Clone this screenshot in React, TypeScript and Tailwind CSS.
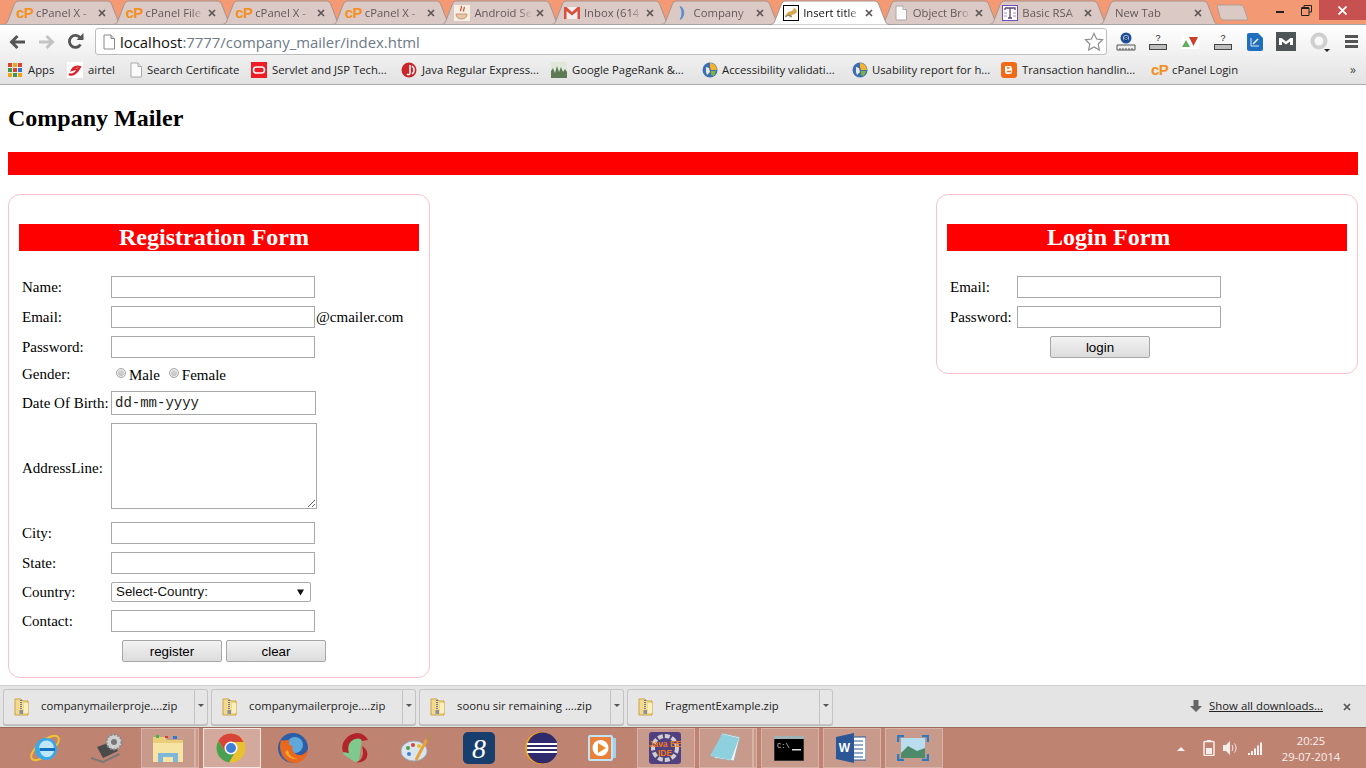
import React from "react";

const UI = "font-['Open_Sans','Noto_Sans',sans-serif]";
const SERIF = "font-['Liberation_Serif','Times_New_Roman',serif]";
const SANS = "font-['Liberation_Sans',Arial,sans-serif]";

const CP = () => (
  <span className={`${SANS} block w-[16px] text-[15px] leading-[16px] font-bold tracking-[-0.6px] text-[#f3901f]`}>cP</span>
);
const Doc = ({ c = "#a9a9a9" }: { c?: string }) => (
  <svg width="16" height="16" viewBox="0 0 16 16"><path d="M3 1h7l3.5 3.5V15H3z" fill="#fafafa" stroke={c} /><path d="M10 1v3.5h3.5" fill="#e8e8e8" stroke={c} /></svg>
);
const Coffee = () => (
  <svg width="16" height="16" viewBox="0 0 16 16"><rect width="16" height="16" fill="#f6efe6" /><path d="M7 1c2 2-2 3 0 5M10 2c1.5 2-2 2.500 0 4.500" stroke="#d0532c" strokeWidth="1.300" fill="none" /><path d="M2 9h11c0 3-2 5-5.500 5S2 12 2 9z" fill="#e8c6a8" stroke="#c27b50" strokeWidth=".7" /></svg>
);
const Gmail = () => (
  <svg width="16" height="16" viewBox="0 0 16 16"><rect x="0" y="2" width="16" height="12" fill="#f4eeee" /><path d="M0 2h2.500L8 7l5.500-5H16v12h-2.500V6L8 10.500 2.500 6v8H0z" fill="#d9503f" /></svg>
);
const Arc = () => (
  <svg width="16" height="16" viewBox="0 0 16 16"><path d="M6 1.500c5 1 5 11.500 0 13 2.500-4 2.500-9 0-13z" fill="#5a8bd0" stroke="#5a8bd0" strokeWidth=".8" /></svg>
);
const Tomcat = () => (
  <svg width="16" height="16" viewBox="0 0 16 16"><rect x=".5" y=".5" width="15" height="15" fill="#fff" stroke="#000" /><path d="M2 11l3-4 4-1 2-3 2 1 1 3-2 2-3 1-2 3-1-2z" fill="#d5a94e" /><path d="M2 12l4-2 3 2" stroke="#777" fill="none" /></svg>
);
const RSA = () => (
  <svg width="16" height="16" viewBox="0 0 16 16"><rect x=".5" y=".5" width="15" height="15" fill="#fff" stroke="#6b4fc0" /><path d="M3 3h10v2M8 3v10M6 13h4M3 3v2" stroke="#5a4870" strokeWidth="1.300" fill="none" /><path d="M2 8h3M11 8h3M2 11h3M11 11h3" stroke="#a090b0" /></svg>
);

const tabs = [
  { t: "cPanel X - ", i: <CP /> },
  { t: "cPanel File", i: <CP /> },
  { t: "cPanel X - ", i: <CP /> },
  { t: "cPanel X - ", i: <CP /> },
  { t: "Android Se", i: <Coffee /> },
  { t: "Inbox (614", i: <Gmail /> },
  { t: "Company", i: <Arc />, gap: true },
  { t: "Insert title", i: <Tomcat />, active: true },
  { t: "Object Bro", i: <Doc /> },
  { t: "Basic RSA", i: <RSA /> },
  { t: "New Tab", i: null },
];

const Tab = ({ t, i, active, gap }: { t: string; i: React.ReactNode; active?: boolean; gap?: boolean }) => (
  <div className={`relative h-[25px] w-[109.6px] shrink-0 ${active ? "z-10" : "z-0"}`}>
    <svg className="absolute left-[-6px] top-0" width="122" height="25" viewBox="0 0 122 25">
      <path d="M0 24.500c4 0 5-1 6-4L12 5c1-3 2.500-4 5-4h88c2.500 0 4 1 5 4l6 15.500c1 3 2 4 6 4" fill={active ? "#ffffff" : "#dbc9c5"} stroke="#a9938c" />
    </svg>
    <div className="absolute left-[8px] top-[5px] flex h-[16px] items-center">
      {i ? <span className="h-[16px] w-[16px]">{i}</span> : <span className="w-[3px]" />}
      <span className={`${UI} ${i ? "ml-[4px]" : "ml-0"} w-[58px] overflow-hidden whitespace-nowrap text-[11.300px] leading-[16px] ${active ? "text-[#111]" : "text-[#63575a]"} ${gap ? "-ml-[3px]" : ""} [mask-image:linear-gradient(to_right,#000_78%,transparent)]`}>{t}</span>
    </div>
    <svg className="absolute left-[90px] top-[9px]" width="8" height="8" viewBox="0 0 8 8"><path d="M1 1l6 6M7 1L1 7" stroke="#5c5656" strokeWidth="1.700" /></svg>
  </div>
);

const TitleBar = () => (
  <div className="relative flex h-[25px] bg-[#f39a74] pl-[8px]">
    {tabs.map((x, n) => <Tab key={n} {...x} />)}
    <div className="absolute bottom-0 left-0 right-0 z-[1] h-px bg-[#a4a4a4]" />
    <svg className="ml-[3px] mt-[4px] shrink-0" width="32" height="17" viewBox="0 0 32 17"><path d="M1 1h22c2 0 3 1 4 3l4 12H7c-2 0-3-1-4-3L.5 3C.3 2 .5 1 1 1z" fill="#dbc9c5" stroke="#b39c94" /></svg>
    <div className="absolute right-0 top-0 z-[2] flex h-[20px] items-start">
      <div className="flex h-[20px] w-[26px] items-center justify-center"><div className="mt-[3px] h-[2px] w-[8px] bg-[#222]" /></div>
      <div className="flex h-[20px] w-[26px] items-center justify-center">
        <svg width="11" height="11" viewBox="0 0 11 11"><path d="M3 2.500V.5h7.500v6.500H8M.5 3h7.500v7.500H.5z" fill="none" stroke="#222" /><path d="M.5 3h7.500" stroke="#222" strokeWidth="2" /></svg>
      </div>
      <div className="flex h-[20px] w-[47px] items-center justify-center bg-[#c75050]">
        <svg width="9" height="9" viewBox="0 0 9 9"><path d="M.5.5l8 8M8.500.5l-8 8" stroke="#fff" strokeWidth="1.800" /></svg>
      </div>
    </div>
  </div>
);

const Ext1 = () => (
  <svg width="20" height="20" viewBox="0 0 20 20"><circle cx="10" cy="6" r="5.500" fill="#1b4f9c" /><circle cx="10" cy="6" r="3" fill="#a9c6e8" /><text x="10" y="9" textAnchor="middle" fontSize="8" fontWeight="700" fill="#0a2a5a" fontFamily="Liberation Sans">8</text><path d="M1 13h18v5H1zM4 16v2M7 16v2M10 16v2M13 16v2M16 16v2" fill="#eee" stroke="#555" /></svg>
);
const Ext2 = () => (
  <svg width="20" height="20" viewBox="0 0 20 20"><text x="10" y="9" textAnchor="middle" fontSize="9" fill="#222" fontFamily="Liberation Sans">?</text><rect x="1.500" y="12.500" width="17" height="5" fill="#bdbdbd" stroke="#444" /></svg>
);

const Toolbar = () => (
  <div className="flex h-[33px] items-center pl-[9px]">
    <svg width="17" height="16" viewBox="0 0 17 16"><path d="M16 8H3M8.500 2L2.500 8l6 6" fill="none" stroke="#555" strokeWidth="3" /></svg>
    <svg className="ml-[12px]" width="17" height="16" viewBox="0 0 17 16"><path d="M1 8h13M8.500 2l6 6-6 6" fill="none" stroke="#c4c4c4" strokeWidth="3" /></svg>
    <svg className="ml-[12px]" width="17" height="17" viewBox="0 0 17 17"><path d="M13.500 11.500A6 6 0 1 1 13 4.500" fill="none" stroke="#555" strokeWidth="2.800" /><path d="M9.500 7h7V0z" fill="#555" /></svg>
    <div className="ml-[11px] flex h-[27px] w-[1012px] shrink-0 items-center rounded-[3px] border border-[#bdbdbd] bg-white">
      <span className="ml-[5px]"><svg className="block" width="16" height="16" viewBox="0 0 16 16"><path d="M3 1h7l3.500 3.500V15H3z" fill="#fff" stroke="#8a8a8a" /><path d="M10 1v3.500h3.500" fill="#ddd" stroke="#8a8a8a" /></svg></span>
      <span className={`${UI} ml-[3px] whitespace-nowrap text-[14.900px] leading-[20px] text-[#6d7a88]`}><span className="text-[#111]">localhost</span>:7777/company_mailer/index.html</span>
      <svg className="ml-auto mr-[2px]" width="20" height="19" viewBox="0 0 20 19"><path d="M10 1.500l2.600 5.500 6 .8-4.400 4.200 1.100 6L10 15l-5.300 3 1.100-6L1.400 7.800l6-.8z" fill="#fff" stroke="#8d8d8d" strokeWidth="1.200" /></svg>
    </div>
    <div className="ml-[9px]"><Ext1 /></div>
    <div className="ml-[12px]"><Ext2 /></div>
    <div className="ml-[13px]">
      <svg width="18" height="14" viewBox="0 0 18 14"><rect width="18" height="14" fill="#fff" /><path d="M1 12l4-7 4 7z" fill="#5eb05e" /><path d="M8 2h9l-4.500 9z" fill="#c9402d" /></svg>
    </div>
    <div className="ml-[14px]"><Ext2 /></div>
    <div className="ml-[14px]">
      <svg width="16" height="18" viewBox="0 0 16 18"><path d="M0 2q0-2 2-2h9l5 5v11q0 2-2 2H2q-2 0-2-2z" fill="#1f6fbe" /><path d="M4 5v8h8" fill="none" stroke="#dcecf9" /><path d="M6 11l5-5" stroke="#fff" strokeWidth="1.500" /></svg>
    </div>
    <div className="ml-[13px]">
      <svg width="20" height="19" viewBox="0 0 20 19"><rect width="20" height="19" fill="#4e5557" /><path d="M3 13V6h2.500L10 9.500 14.500 6H17v7h-3V9.500l-4 3-4-3V13z" fill="#fff" /></svg>
    </div>
    <div className="ml-[14px]">
      <svg width="20" height="20" viewBox="0 0 20 20"><circle cx="9" cy="9" r="6.500" fill="none" stroke="#cfcfcf" strokeWidth="4" /><path d="M14 17h6l-3 3z" fill="#222" /></svg>
    </div>
    <div className="ml-[15px]">
      <div className="flex w-[13px] flex-col gap-[2px]"><div className="h-[3px] bg-[#555]" /><div className="h-[3px] bg-[#555]" /><div className="h-[3px] bg-[#555]" /></div>
    </div>
  </div>
);

const Globe = () => (
  <svg width="16" height="16" viewBox="0 0 16 16"><circle cx="8" cy="8" r="7.500" fill="#3e6fb0" /><path d="M8 1a7 7 0 0 1 7 7H9l-1-3z" fill="#f4b32b" /><path d="M4 5l3 1 1 4-3 3-1-3z" fill="#e9e9e9" /><path d="M9 9h5l-2 5-3-1z" fill="#7fb341" /></svg>
);
const AppsIcon = () => (
  <div className="grid h-[14px] w-[14px] grid-cols-3 gap-[1px]">
    {["#e0402f", "#f0a31a", "#e0402f", "#3f9b4a", "#e0402f", "#2f79d0", "#f0a31a", "#3f9b4a", "#f0a31a"].map((c, i) => (
      <div key={i} className="h-[4px] w-[4px]" style={{ backgroundColor: c }} />
    ))}
  </div>
);
const Airtel = () => (
  <svg width="16" height="16" viewBox="0 0 16 16"><rect width="16" height="16" fill="#fff" /><path d="M2 12c3 2 8-1 11-7-3-1-7 0-8 3 3-1 5-1 6 0" fill="none" stroke="#d8232a" strokeWidth="2.200" /></svg>
);
const Oracle = () => (
  <svg width="16" height="16" viewBox="0 0 16 16"><rect width="16" height="16" fill="#ee1c25" /><rect x="2.500" y="5" width="11" height="6" rx="3" fill="none" stroke="#fff" strokeWidth="1.600" /></svg>
);
const JavaR = () => (
  <svg width="16" height="16" viewBox="0 0 16 16"><circle cx="8" cy="8" r="7.500" fill="#c9252b" /><path d="M9 3v8c0 2-2 2-3 1M11 4a5 5 0 0 1 0 8" fill="none" stroke="#fff" strokeWidth="1.500" /></svg>
);
const PageRank = () => (
  <svg width="16" height="16" viewBox="0 0 16 16"><rect width="16" height="16" fill="#dfe8d9" /><path d="M0 16V9l2-3 2 5 2-7 2 6 2-5 2 5 2-3 2 3v6z" fill="#5d7a55" /></svg>
);
const Blogger = () => (
  <svg width="16" height="16" viewBox="0 0 16 16"><rect width="16" height="16" rx="3" fill="#f26a16" /><path d="M5 4h4c1.500 0 2 1.500 2 3v2v1c0 1-1 2-2 2H6c-1 0-2-1-2-2V5c0-.5.500-1 1-1z" fill="#fff" /><path d="M6 6h2.500M6 9.500h4" stroke="#f26a16" strokeWidth="1.300" /></svg>
);

const marks = [
  { i: <AppsIcon />, t: "Apps", w: "w-[59px]", ic: "w-[20px]" },
  { i: <Airtel />, t: "airtel", w: "w-[61px]", ic: "w-[21px]" },
  { i: <Doc />, t: "Search Certificate", w: "w-[123px]", ic: "w-[19px]" },
  { i: <Oracle />, t: "Servlet and JSP Tech...", w: "w-[150px]", ic: "w-[21px]" },
  { i: <JavaR />, t: "Java Regular Express...", w: "w-[150px]", ic: "w-[21px]" },
  { i: <PageRank />, t: "Google PageRank &...", w: "w-[151px]", ic: "w-[21px]" },
  { i: <Globe />, t: "Accessibility validati...", w: "w-[150px]", ic: "w-[20px]" },
  { i: <Globe />, t: "Usability report for h...", w: "w-[149px]", ic: "w-[20px]" },
  { i: <Blogger />, t: "Transaction handlin...", w: "w-[150px]", ic: "w-[21px]" },
  { i: <CP />, t: "cPanel Login", w: "w-[100px]", ic: "w-[21px]" },
];

const Bookmarks = () => (
  <div className="flex h-[27px] items-center border-b border-[#ababab] pb-[2px] pl-[8px]">
    {marks.map((m) => (
      <div key={m.t} className={`flex shrink-0 items-center ${m.w}`}>
        <div className={`shrink-0 ${m.ic}`}>{m.i}</div>
        <span className={`${UI} whitespace-nowrap text-[11.300px] leading-[16px] text-[#222]`}>{m.t}</span>
      </div>
    ))}
    <span className={`${UI} ml-auto mr-[10px] text-[12px] leading-[16px] text-[#444]`}>»</span>
  </div>
);

const inputCls = "block h-[22px] w-[204px] border border-[#a9a9a9] bg-white";
const Label = ({ children, w = "w-[92px]", extra = "" }: { children: React.ReactNode; w?: string; extra?: string }) => (
  <div className={`${w} ${extra} shrink-0 whitespace-nowrap pl-[3px] text-[15px] leading-[18px] text-black`}>{children}</div>
);
const Row = ({ label, children, mt = "mt-[8px]" }: { label: string; children?: React.ReactNode; mt?: string }) => (
  <div className={`flex items-center ${mt}`}>
    <Label>{label}</Label>
    <input className={inputCls} readOnly aria-label={label} />
    {children}
  </div>
);
const Btn = ({ children }: { children: string }) => (
  <button className={`${SANS} h-[22px] w-[100px] rounded-[2px] border border-[#a6a6a6] bg-gradient-to-b from-[#f2f2f2] to-[#dcdcdc] pt-[1px] text-[13.333px] leading-[19px] text-black`}>{children}</button>
);
const Radio = () => <span className="block h-[10px] w-[10px] rounded-full border border-[#a8a8a8] bg-gradient-to-b from-[#dcdcdc] to-[#bdbdbd] shadow-[inset_0_0_0_1px_#eee]" />;
const Heading = ({ children }: { children: string }) => (
  <h3 className="h-[27px] bg-[#ff0000] pl-[100px] text-[24px] leading-[27px] font-bold text-white">{children}</h3>
);

const Register = () => (
  <div className={`${SERIF} h-[484px] w-[422px] rounded-[12px] border border-[#ffc0cb] bg-white px-[10px] pt-[29px]`}>
    <Heading>Registration Form</Heading>
    <Row label="Name:" mt="mt-[25px]" />
    <Row label="Email:"><span className="ml-px text-[15px] leading-[18px]">@cmailer.com</span></Row>
    <Row label="Password:" />
    <div className="mt-[8px] flex h-[16px] items-center">
      <Label>Gender:</Label>
      <span className="ml-[5px] mt-[-2px]"><Radio /></span>
      <span className="ml-[3px] mt-[1px] text-[15px] leading-[18px]">Male</span>
      <span className="ml-[9px] mt-[-2px]"><Radio /></span>
      <span className="ml-[3px] mt-[1px] text-[15px] leading-[18px]">Female</span>
    </div>
    <div className="mt-[9px] flex items-center">
      <Label>Date Of Birth:</Label>
      <input className="block h-[24px] w-[205px] border border-[#a9a9a9] bg-white pl-[3px] font-['Liberation_Mono',monospace] text-[14px] text-[#222]" readOnly defaultValue="dd-mm-yyyy" aria-label="Date Of Birth" />
    </div>
    <div className="mt-[8px] flex items-center">
      <Label extra="pt-[3px]">AddressLine:</Label>
      <textarea className="block h-[86px] w-[206px] border border-[#a9a9a9] bg-white" readOnly aria-label="AddressLine" />
    </div>
    <Row label="City:" mt="mt-[13px]" />
    <Row label="State:" />
    <div className="mt-[8px] flex items-center">
      <Label>Country:</Label>
      <div className={`${SANS} flex h-[20px] w-[200px] items-center justify-between rounded-[2px] border border-[#a9a9a9] bg-white pl-[4px] pr-[6px] text-[13.333px] text-[#111]`}>
        <span>Select-Country:</span>
        <svg width="7" height="7" viewBox="0 0 7 7"><path d="M0 .5h7L3.500 6.500z" fill="#111" /></svg>
      </div>
    </div>
    <Row label="Contact:" />
    <div className="mt-[8px] flex gap-[4px] pl-[103px]"><Btn>register</Btn><Btn>clear</Btn></div>
  </div>
);

const Login = () => (
  <div className={`${SERIF} h-[180px] w-[422px] rounded-[12px] border border-[#ffc0cb] bg-white px-[10px] pt-[29px]`}>
    <Heading>Login Form</Heading>
    <div className="mt-[25px] flex items-center"><Label w="w-[70px]">Email:</Label><input className={inputCls} readOnly aria-label="Email" /></div>
    <div className="mt-[8px] flex items-center"><Label w="w-[70px]">Password:</Label><input className={inputCls} readOnly aria-label="Password" /></div>
    <div className="mt-[8px] flex pl-[103px]"><Btn>login</Btn></div>
  </div>
);

const Zip = () => (
  <svg width="16" height="18" viewBox="0 0 16 18"><path d="M1 1h6l2 2h5v14H1z" fill="#f5d98a" stroke="#c9a348" /><path d="M10 5h4v10h-4z" fill="#fbeebd" /><path d="M7 2v12" stroke="#6f7ea0" strokeWidth="2" strokeDasharray="1 1" /><rect x="5.500" y="12" width="3.500" height="4" fill="#8a8fa5" /></svg>
);
const files = [
  { t: "companymailerproje....zip", w: "w-[205px]" },
  { t: "companymailerproje....zip", w: "w-[205px]" },
  { t: "soonu sir remaining ....zip", w: "w-[205px]" },
  { t: "FragmentExample.zip", w: "w-[206px]" },
];

const Downloads = () => (
  <div className="flex h-[42px] items-center border-t border-[#d0d0d0] bg-[#e4e4e4] pl-[3px]">
    <div className="flex gap-[3px]">
      {files.map((f, i) => (
        <div key={i} className={`flex h-[36px] items-center rounded-[3px] border border-[#c4c4c4] bg-[#e6e6e6] shadow-[0_1px_0_#bbb] ${f.w}`}>
          <div className="ml-[10px] w-[27px] shrink-0"><Zip /></div>
          <span className={`${UI} -mt-[2px] flex-1 whitespace-nowrap text-[11.300px] leading-[16px] text-[#222]`}>{f.t}</span>
          <div className="flex h-full w-[13px] shrink-0 items-center justify-center border-l border-[#c4c4c4]">
            <svg className="mb-[3px]" width="6" height="3" viewBox="0 0 6 3"><path d="M0 0h6L3 3z" fill="#555" /></svg>
          </div>
        </div>
      ))}
    </div>
    <svg className="ml-auto" width="12" height="13" viewBox="0 0 12 13"><path d="M3.500 0h5v6H12L6 12 0 6h3.500z" fill="#666" /></svg>
    <span className={`${UI} -mt-[2px] ml-[7px] whitespace-nowrap text-[11.400px] leading-[16px] text-[#222] underline`}>Show all downloads...</span>
    <svg className="ml-[20px] mr-[15px]" width="8" height="8" viewBox="0 0 8 8"><path d="M1 1l6 6M7 1L1 7" stroke="#555" strokeWidth="1.700" /></svg>
  </div>
);

const IE = () => (
  <svg width="34" height="34" viewBox="0 0 34 34"><ellipse cx="17" cy="17" rx="17" ry="7" transform="rotate(-40 17 17)" fill="none" stroke="#f2c230" strokeWidth="2" /><circle cx="18" cy="18" r="11" fill="#38a9e8" /><path d="M11 17h15a7.500 7.500 0 0 0-15 0z" fill="#bfe6fa" /><path d="M12 20h14c-1 4-4 6-7 6s-6-2-7-6z" fill="#bfe6fa" /><rect x="12" y="17" width="15" height="3" fill="#1172c4" /></svg>
);
const Laptop = () => (
  <svg width="32" height="30" viewBox="0 0 32 30"><path d="M6 14l16-6 5 10-15 7z" fill="#4a4a4a" /><path d="M0 24l12 4 16-8 1 2-17 8L0 26z" fill="#777" /><circle cx="23" cy="9" r="7.500" fill="#d0d0d0" stroke="#8a8a8a" strokeDasharray="2 1.500" strokeWidth="2" /><circle cx="23" cy="9" r="3" fill="#777" /></svg>
);
const Folder = () => (
  <svg width="32" height="30" viewBox="0 0 32 30"><path d="M1 4h12l2 3h16v6H1z" fill="#e9cf7a" /><rect x="4" y="2" width="3" height="3" fill="#3fb54a" /><rect x="13" y="3" width="3" height="2" fill="#d93a3a" /><rect x="21" y="3" width="4" height="3" fill="#2f79d0" /><path d="M1 10h30v19H1z" fill="#f6e4a4" /><path d="M6 29v-9h20v9h-5v-5H11v5z" fill="#7fb6dc" /></svg>
);
const Chrome = () => (
  <svg width="30" height="30" viewBox="0 0 30 30"><circle cx="15" cy="15" r="14.500" fill="#e8c130" /><path d="M15 .5A14.500 14.500 0 0 0 2.400 7.800L9 18.500 15 9h12.600A14.500 14.500 0 0 0 15 .5z" fill="#d8433a" /><path d="M2.400 7.800A14.500 14.500 0 0 0 13 29.400l6-10.400-10-.5z" fill="#4aa052" /><circle cx="15" cy="15" r="6.500" fill="#fff" /><circle cx="15" cy="15" r="5" fill="#3f7fd8" /></svg>
);
const Firefox = () => (
  <svg width="32" height="32" viewBox="0 0 32 32"><circle cx="16" cy="16" r="15" fill="#2c5ea8" /><circle cx="18" cy="13" r="8" fill="#5fa8dc" /><path d="M4 8c-3 9 1 22 13 23 9 0 14-7 14-14-2 4-5 6-8 6-6 0-9-5-7-9-4 0-5-3-3-6-3 0-7 1-9 0z" fill="#e8681f" /><path d="M8 20c2 5 7 8 13 7-5-1-9-3-10-9z" fill="#f4a52e" /></svg>
);
const RedApp = () => (
  <svg width="30" height="32" viewBox="0 0 30 32"><path d="M15 30L3 22 8 8l14-3-3 25z" fill="#7fc98f" /><path d="M3 20C0 10 8 2 17 1c5 0 9 3 11 7l-6 1c-1-3-4-3-7-2-6 2-8 8-6 14z" fill="#b3242a" /><path d="M22 14c5 3 7 8 4 13-3 3-7 4-10 3 5-1 9-6 6-16z" fill="#b3242a" /></svg>
);
const Palette = () => (
  <svg width="32" height="32" viewBox="0 0 32 32"><ellipse cx="13" cy="19" rx="13" ry="10" fill="#dbe5ee" stroke="#9fb2c2" /><circle cx="7" cy="16" r="2" fill="#4aa052" /><circle cx="12" cy="13" r="2" fill="#d8433a" /><circle cx="18" cy="14" r="2" fill="#e8c130" /><circle cx="8" cy="22" r="2" fill="#3f7fd8" /><path d="M15 28L26 7" stroke="#e9a23b" strokeWidth="3" /><path d="M25 8l3-7 3 2-2 7z" fill="#b58a60" /></svg>
);
const S8 = () => (
  <svg width="32" height="32" viewBox="0 0 32 32"><rect width="32" height="32" rx="5" fill="#173e6d" /><text x="16" y="26" textAnchor="middle" fontSize="28" fontStyle="italic" fill="#fff" fontFamily="Liberation Serif">8</text></svg>
);
const Eclipse = () => (
  <svg width="32" height="32" viewBox="0 0 32 32"><circle cx="16" cy="16" r="16" fill="#f1a01f" /><circle cx="17.500" cy="16" r="15.500" fill="#2e2a6b" /><path d="M2 12h31M2 16h31M2 20h31" stroke="#fff" strokeWidth="2" /></svg>
);
const Media = () => (
  <svg width="30" height="28" viewBox="0 0 30 28"><rect x="6" y="4" width="22" height="20" fill="#9fd3ee" /><rect x="1" y="2" width="23" height="24" rx="1" fill="#e9813a" stroke="#bfe4f6" strokeWidth="2" /><circle cx="12.500" cy="14" r="8" fill="#fff" /><path d="M10 9l8 5-8 5z" fill="#ef8a2a" /></svg>
);
const JavaEE = () => (
  <svg width="32" height="32" viewBox="0 0 32 32"><rect width="32" height="32" rx="3" fill="#51407f" /><circle cx="16" cy="16" r="12" fill="none" stroke="#cfcfcf" strokeWidth="4" strokeDasharray="5 2" /><text x="16" y="15" textAnchor="middle" fontSize="8.500" fontWeight="700" fill="#f07a1a" fontFamily="Liberation Sans">Java EE</text><text x="16" y="24" textAnchor="middle" fontSize="8.500" fontWeight="700" fill="#f07a1a" fontFamily="Liberation Sans">IDE</text></svg>
);
const Notepad = () => (
  <svg width="32" height="32" viewBox="0 0 32 32"><path d="M12 1l18 4-6 24-20-3z" fill="#f2f2f2" stroke="#a8a8a8" /><path d="M12 2L0 24l21 4 8-22z" fill="#8fd0de" /></svg>
);
const Cmd = () => (
  <svg width="30" height="25" viewBox="0 0 30 25"><rect width="30" height="25" fill="#000" stroke="#666" /><rect width="30" height="3" fill="#9fb5b5" /><text x="3" y="12" fontSize="7" fill="#ddd" fontFamily="Liberation Mono">C:\</text><rect x="18" y="13" width="9" height="1.500" fill="#ddd" /></svg>
);
const Word = () => (
  <svg width="30" height="30" viewBox="0 0 30 30"><rect x="14" y="4" width="16" height="23" fill="#fff" stroke="#2b5797" /><path d="M17 8h10M17 12h10M17 16h10M17 20h10M17 24h10" stroke="#2b5797" /><path d="M0 4l18-4v30L0 26z" fill="#2b5797" /><text x="8.500" y="19" textAnchor="middle" fontSize="12" fontWeight="700" fill="#fff" fontFamily="Liberation Sans">W</text></svg>
);
const Photos = () => (
  <svg width="32" height="26" viewBox="0 0 32 26"><rect x="4" y="3" width="24" height="20" fill="#b9dcef" /><path d="M4 18l7-7 9 5 8-3v10H4z" fill="#4c8a6a" /><path d="M1 7V1h6M25 1h6v6M1 19v6h6M31 19v6h-6" fill="none" stroke="#2f79c0" strokeWidth="2.500" /></svg>
);

type Slot = { i: React.ReactNode; state?: "run" | "active"; stack?: boolean };
const slots: Slot[] = [
  { i: <IE /> }, { i: <Laptop /> }, { i: <Folder />, state: "run", stack: true }, { i: <Chrome />, state: "active" },
  { i: <Firefox /> }, { i: <RedApp /> }, { i: <Palette /> }, { i: <S8 /> }, { i: <Eclipse /> }, { i: <Media /> },
  { i: <JavaEE />, state: "run" }, { i: <Notepad />, state: "run", stack: true }, { i: <Cmd />, state: "run" }, { i: <Word />, state: "run" }, { i: <Photos />, state: "run" },
];

const Taskbar = () => (
  <div className="flex h-[41px] border-t border-[#9c6a5c] bg-[#bf8372] pl-[14px]">
    {slots.map((s, idx) => (
      <div key={idx} className="relative flex h-full w-[62px] shrink-0 items-center justify-center">
        {s.state && (
          <div className={`absolute bottom-0 left-[3px] top-0 border ${s.state === "active" ? "border-[#f4e6e2] bg-[#d3a99e]" : "border-[#d9b3a8] bg-[#c89a8c]"} ${s.stack ? "right-[5px]" : "right-[1px]"}`} />
        )}
        {s.stack && <div className="absolute bottom-0 right-[1px] top-0 w-[4px] border border-[#d9b3a8] bg-[#c89a8c]" />}
        <div className={`relative ${s.stack ? "-ml-[2px]" : ""}`}>{s.i}</div>
      </div>
    ))}
    <div className="ml-auto flex items-center">
      <svg width="8" height="5" viewBox="0 0 8 5"><path d="M0 5l4-4 4 4z" fill="#f4f0ee" /></svg>
      <svg className="ml-[18px]" width="12" height="16" viewBox="0 0 12 16"><rect x="1" y="1.500" width="10" height="14" rx="1" fill="none" stroke="#f6efec" strokeWidth="1.500" /><rect x="4" y="0" width="4" height="2" fill="#f6efec" /><rect x="3" y="8" width="6" height="6" fill="#f6efec" /></svg>
      <svg className="ml-[7px]" width="17" height="16" viewBox="0 0 17 16"><path d="M1 5h3l4-4v14l-4-4H1z" fill="#f4eeeb" /><path d="M10 5c1 2 1 4 0 6M12.500 3.500c2 3 2 6 0 9" fill="none" stroke="#f4eeeb" /></svg>
      <svg className="ml-[8px]" width="16" height="13" viewBox="0 0 16 13"><path d="M1 11h2v2H1zM4 9h2v4H4zM7 6.500h2V13H7zM10 3.500h2V13h-2zM13 .5h2V13h-2z" fill="#f8f2f0" /></svg>
      <div className={`${UI} ml-[15px] mr-[22px] mt-[2px] flex w-[66px] flex-col items-center text-[11.200px] leading-[16px] text-[#f8f0ed]`}>
        <span>20:25</span>
        <span>29-07-2014</span>
      </div>
    </div>
  </div>
);

export default function App() {
  return (
    <div className="flex h-[768px] w-[1366px] flex-col overflow-hidden bg-white">
      <TitleBar />
      <div className="bg-gradient-to-b from-white to-[#e2e2e2]">
        <Toolbar />
        <Bookmarks />
      </div>
      <main className={`${SERIF} h-[600px] overflow-hidden bg-white px-[8px] pt-[20px]`}>
        <h2 className="text-[24px] leading-[27px] font-bold text-black">Company Mailer</h2>
        <div className="mt-[20px] h-[23px] bg-[#ff0000]" />
        <div className="mt-[19px] flex items-start justify-between">
          <Register />
          <Login />
        </div>
      </main>
      <Downloads />
      <Taskbar />
    </div>
  );
}
